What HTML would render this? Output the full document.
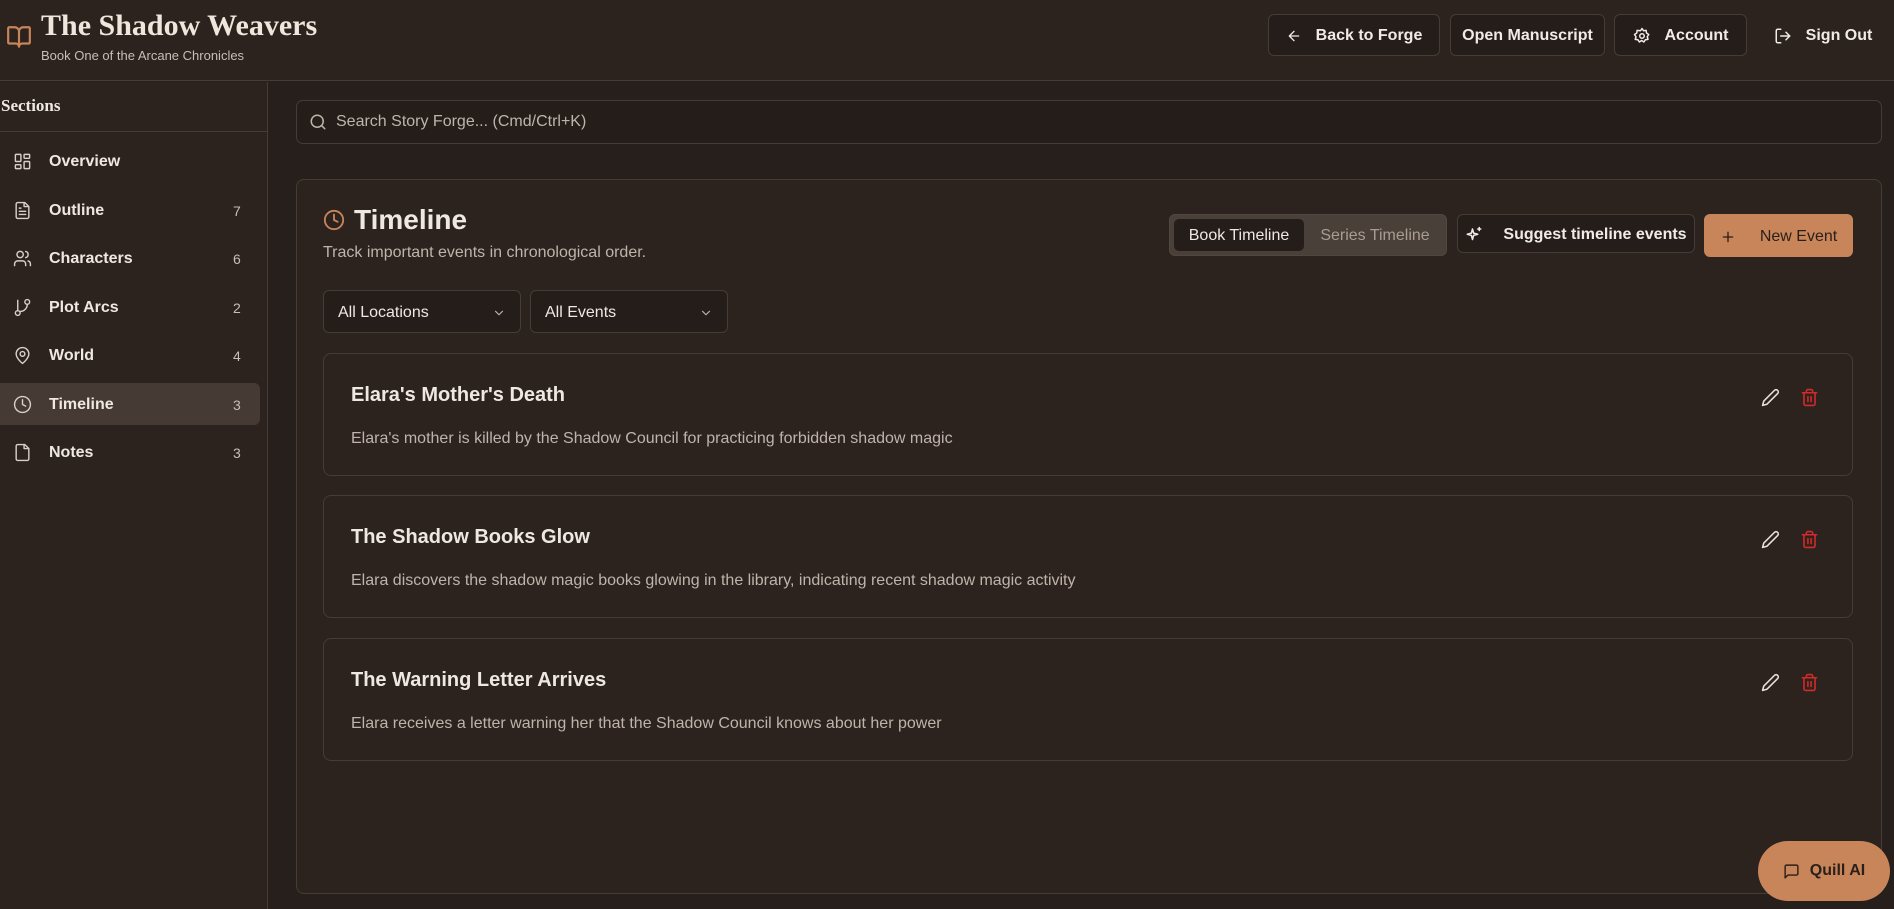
<!DOCTYPE html>
<html><head><meta charset="utf-8"><style>
*{box-sizing:border-box;margin:0;padding:0}
body{width:1894px;height:909px;background:#271f1b;font-family:"Liberation Sans",sans-serif;color:#efe8e2;position:relative;overflow:hidden}
.a{position:absolute}
svg{fill:none;stroke:currentColor;stroke-width:2;stroke-linecap:round;stroke-linejoin:round}
header{position:absolute;left:0;top:0;width:1894px;height:81px;background:#2c231e;border-bottom:1px solid #463c36}
.btn{position:absolute;top:14px;height:42px;border:1px solid #463c36;border-radius:6px;background:#241d19;display:flex;align-items:center;justify-content:center;gap:14px;font-size:16px;font-weight:bold;color:#f1ebe5;padding-top:2px}
.side{position:absolute;left:0;top:82px;width:268px;height:827px;background:#2c231e;border-right:1px solid #463c36}
.item{position:absolute;left:0;width:260px;height:42px;display:flex;align-items:center;font-size:16px;font-weight:bold;border-radius:0 6px 6px 0;padding-top:2px}
.item svg{position:absolute;left:13px;top:12px;width:19px;height:19px;color:#d8cfc8;stroke-width:1.8}
.item span{position:absolute;left:49px}
.item b{position:absolute;left:233px;font-size:14px;font-weight:normal;color:#c9beb6}
.card{position:absolute;left:323px;width:1530px;height:123px;border:1px solid #463c36;border-radius:8px;background:#2c231e}
.card h3{position:absolute;left:27px;top:30px;font-size:20px;font-weight:bold}
.card p{position:absolute;left:27px;top:76px;font-size:16px;color:#bfb4ab}
.card .e{position:absolute;left:1437px;top:34px;width:19px;height:19px;color:#e8e0d9}
.card .d{position:absolute;left:1476px;top:34px;width:19px;height:19px;color:#d42a2a}
.sel{position:absolute;top:290px;height:43px;border:1px solid #463c36;border-radius:6px;background:#241d19;font-size:16px;display:flex;align-items:center;padding-left:14px;padding-top:2px}
.sel svg{position:absolute;right:14px;width:14px;height:14px;color:#bfb4ab}
</style></head><body>
<header>
<svg class="a" style="left:6px;top:24px;width:26px;height:26px;color:#c8855a" viewBox="0 0 24 24"><path d="M12 7v14M3 18a1 1 0 0 1-1-1V4a1 1 0 0 1 1-1h5a4 4 0 0 1 4 4 4 4 0 0 1 4-4h5a1 1 0 0 1 1 1v13a1 1 0 0 1-1 1h-6a3 3 0 0 0-3 3 3 3 0 0 0-3-3z"/></svg>
<div class="a" style="left:41px;top:9px;font-family:'Liberation Serif',serif;font-weight:bold;font-size:30px;color:#efe6dc">The Shadow Weavers</div>
<div class="a" style="left:41px;top:48px;font-size:13px;color:#c9beb6">Book One of the Arcane Chronicles</div>
<div class="btn" style="left:1268px;width:172px"><svg width="16" height="16" viewBox="0 0 24 24"><path d="M19 12H5M12 19l-7-7 7-7"/></svg>Back to Forge</div>
<div class="btn" style="left:1450px;width:155px">Open Manuscript</div>
<div class="btn" style="left:1614px;width:133px"><svg width="18" height="18" viewBox="0 0 24 24"><circle cx="12" cy="12" r="3"/><path d="M12 2l2 3 3.5-.5.5 3.5 3 2-2 3 1 3.5-3.5.5-2 3-3-2-3 2-2-3-3.5-.5 1-3.5-2-3 3-2 .5-3.5L10 5z"/></svg>Account</div>
<div class="btn" style="left:1762px;width:122px;border:none;background:none"><svg width="18" height="18" viewBox="0 0 24 24"><path d="M9 21H5a2 2 0 0 1-2-2V5a2 2 0 0 1 2-2h4M16 17l5-5-5-5M21 12H9"/></svg>Sign Out</div>
</header>
<div class="side">
<div class="a" style="left:1px;top:14px;font-family:'Liberation Serif',serif;font-weight:bold;font-size:17px">Sections</div>
<div class="a" style="left:0;top:49px;width:268px;border-top:1px solid #463c36"></div>
<div class="item" style="top:58px"><svg viewBox="0 0 24 24"><rect x="3" y="3" width="7" height="9" rx="1"/><rect x="14" y="3" width="7" height="5" rx="1"/><rect x="14" y="12" width="7" height="9" rx="1"/><rect x="3" y="16" width="7" height="5" rx="1"/></svg><span>Overview</span></div>
<div class="item" style="top:107px"><svg viewBox="0 0 24 24"><path d="M15 2H6a2 2 0 0 0-2 2v16a2 2 0 0 0 2 2h12a2 2 0 0 0 2-2V7z"/><path d="M14 2v5h5M16 13H8M16 17H8M10 9H8"/></svg><span>Outline</span><b>7</b></div>
<div class="item" style="top:155px"><svg viewBox="0 0 24 24"><path d="M16 21v-2a4 4 0 0 0-4-4H6a4 4 0 0 0-4 4v2"/><circle cx="9" cy="7" r="4"/><path d="M22 21v-2a4 4 0 0 0-3-3.9M16 3.1a4 4 0 0 1 0 7.8"/></svg><span>Characters</span><b>6</b></div>
<div class="item" style="top:204px"><svg viewBox="0 0 24 24"><circle cx="6" cy="19" r="3"/><circle cx="18" cy="5" r="3"/><path d="M6 16V3M18 8a9 9 0 0 1-9 9"/></svg><span>Plot Arcs</span><b>2</b></div>
<div class="item" style="top:252px"><svg viewBox="0 0 24 24"><path d="M20 10c0 6-8 12-8 12s-8-6-8-12a8 8 0 0 1 16 0z"/><circle cx="12" cy="10" r="3"/></svg><span>World</span><b>4</b></div>
<div class="item" style="top:301px;background:#453a34"><svg viewBox="0 0 24 24"><circle cx="12" cy="12" r="10"/><path d="M12 6v6l4 2"/></svg><span>Timeline</span><b>3</b></div>
<div class="item" style="top:349px"><svg viewBox="0 0 24 24"><path d="M15 2H6a2 2 0 0 0-2 2v16a2 2 0 0 0 2 2h12a2 2 0 0 0 2-2V7z"/><path d="M14 2v5h5"/></svg><span>Notes</span><b>3</b></div>
</div>
<div class="a" style="left:296px;top:100px;width:1586px;height:44px;border:1px solid #463c36;border-radius:7px;background:#241d19"></div>
<svg class="a" style="left:309px;top:113px;width:18px;height:18px;color:#bfb4ab" viewBox="0 0 24 24"><circle cx="11" cy="11" r="8"/><path d="M21 21l-4.3-4.3"/></svg>
<div class="a" style="left:336px;top:113px;font-size:16px;color:#bfb4ab">Search Story Forge... (Cmd/Ctrl+K)</div>
<div class="a" style="left:296px;top:179px;width:1586px;height:715px;border:1px solid #463c36;border-radius:8px;background:#2c231e"></div>
<svg class="a" style="left:323px;top:209px;width:22px;height:22px;color:#c8855a" viewBox="0 0 24 24"><circle cx="12" cy="12" r="10"/><path d="M12 6v6l4 2"/></svg>
<div class="a" style="left:354px;top:204px;font-size:28px;font-weight:bold">Timeline</div>
<div class="a" style="left:323px;top:244px;font-size:16px;color:#bfb4ab">Track important events in chronological order.</div>
<div class="a" style="left:1169px;top:214px;width:278px;height:42px;border-radius:6px;background:#4a403a;border:1px solid #524740"></div>
<div class="a" style="left:1174px;top:219px;width:130px;height:32px;border-radius:5px;background:#241d19;font-size:16px;display:flex;align-items:center;justify-content:center;padding-top:2px">Book Timeline</div>
<div class="a" style="left:1310px;top:219px;width:130px;height:32px;font-size:16px;color:#a89c93;display:flex;align-items:center;justify-content:center;padding-top:2px">Series Timeline</div>
<div class="btn" style="left:1457px;top:214px;width:238px;height:39px;gap:20px"><svg width="18" height="18" viewBox="0 0 24 24"><path d="M10 4l1.5 5.5L17 11l-5.5 1.5L10 18l-1.5-5.5L3 11l5.5-1.5zM19 2v4M17 4h4"/></svg>Suggest timeline events</div>
<div class="btn" style="left:1704px;top:214px;width:149px;height:43px;background:#c8855a;border-color:#c8855a;color:#2a1f19;font-weight:normal;gap:24px"><svg width="16" height="16" viewBox="0 0 24 24"><path d="M12 5v14M5 12h14"/></svg>New Event</div>
<div class="sel" style="left:323px;width:198px">All Locations<svg viewBox="0 0 24 24"><path d="M6 9l6 6 6-6"/></svg></div>
<div class="sel" style="left:530px;width:198px">All Events<svg viewBox="0 0 24 24"><path d="M6 9l6 6 6-6"/></svg></div>
<div class="card" style="top:353px"><h3>Elara's Mother's Death</h3><p>Elara's mother is killed by the Shadow Council for practicing forbidden shadow magic</p><svg class="e" viewBox="0 0 24 24"><path d="M17 3a2.8 2.8 0 1 1 4 4L7.5 20.5 2 22l1.5-5.5z"/></svg><svg class="d" viewBox="0 0 24 24"><path d="M3 6h18M19 6v14a2 2 0 0 1-2 2H7a2 2 0 0 1-2-2V6M8 6V4a2 2 0 0 1 2-2h4a2 2 0 0 1 2 2v2M10 11v6M14 11v6"/></svg></div>
<div class="card" style="top:495px"><h3>The Shadow Books Glow</h3><p>Elara discovers the shadow magic books glowing in the library, indicating recent shadow magic activity</p><svg class="e" viewBox="0 0 24 24"><path d="M17 3a2.8 2.8 0 1 1 4 4L7.5 20.5 2 22l1.5-5.5z"/></svg><svg class="d" viewBox="0 0 24 24"><path d="M3 6h18M19 6v14a2 2 0 0 1-2 2H7a2 2 0 0 1-2-2V6M8 6V4a2 2 0 0 1 2-2h4a2 2 0 0 1 2 2v2M10 11v6M14 11v6"/></svg></div>
<div class="card" style="top:638px"><h3>The Warning Letter Arrives</h3><p>Elara receives a letter warning her that the Shadow Council knows about her power</p><svg class="e" viewBox="0 0 24 24"><path d="M17 3a2.8 2.8 0 1 1 4 4L7.5 20.5 2 22l1.5-5.5z"/></svg><svg class="d" viewBox="0 0 24 24"><path d="M3 6h18M19 6v14a2 2 0 0 1-2 2H7a2 2 0 0 1-2-2V6M8 6V4a2 2 0 0 1 2-2h4a2 2 0 0 1 2 2v2M10 11v6M14 11v6"/></svg></div>
<div class="a" style="left:1758px;top:841px;width:132px;height:60px;border-radius:30px;background:#c8855a;color:#2a1f19;font-size:16px;font-weight:bold;display:flex;align-items:center;justify-content:center;gap:10px"><svg width="17" height="17" viewBox="0 0 24 24"><path d="M21 15a2 2 0 0 1-2 2H7l-4 4V5a2 2 0 0 1 2-2h14a2 2 0 0 1 2 2z"/></svg>Quill AI</div>
</body></html>
